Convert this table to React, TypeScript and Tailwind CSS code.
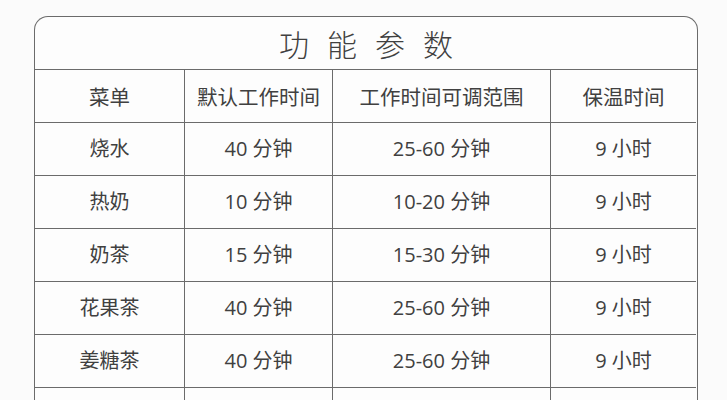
import React from "react";

const rows = [
  ["烧水", "40 分钟", "25-60 分钟", "9 小时"],
  ["热奶", "10 分钟", "10-20 分钟", "9 小时"],
  ["奶茶", "15 分钟", "15-30 分钟", "9 小时"],
  ["花果茶", "40 分钟", "25-60 分钟", "9 小时"],
  ["姜糖茶", "40 分钟", "25-60 分钟", "9 小时"],
  ["", "", "", ""],
];

const header = ["菜单", "默认工作时间", "工作时间可调范围", "保温时间"];

export default function App() {
  return (
    <div
      className="w-[727px] h-[400px] overflow-hidden bg-[#fbfbfb] pt-[16px] pl-[34px]"
      style={{ fontFamily: '"Open Sans", "Noto Sans CJK SC", sans-serif' }}
    >
      <div className="w-[664px] rounded-t-[14px] border-[1.5px] border-b-0 border-[#6b6b6b] text-[#404040] bg-[#fdfdfd]">
        <div className="h-[53px] flex items-center justify-center text-[30px] tracking-[18px] pl-[18px] border-b-[1.5px] border-[#6b6b6b]" style={{ fontFamily: '"Noto Sans CJK SC", sans-serif', fontWeight: 300 }}>
          功能参数
        </div>
        <div className="grid grid-cols-[150px_148px_218px_145px]">
          {header.map((h, i) => (
            <div
              key={i}
              className={`h-[53px] flex items-center justify-center text-[20.5px] border-b-[1.5px] border-[#6b6b6b] ${i < 3 ? "border-r-[1.5px]" : ""}`}
              style={{ fontFamily: '"Noto Sans CJK SC", sans-serif', fontWeight: 400 }}
            >
              {h}
            </div>
          ))}
          {rows.map((r, ri) =>
            r.map((c, ci) => (
              <div
                key={`${ri}-${ci}`}
                className={`h-[53px] flex items-center justify-center text-[20px] border-b-[1.5px] border-[#6b6b6b] ${ci < 3 ? "border-r-[1.5px]" : ""}`}
              >
                {c}
              </div>
            ))
          )}
        </div>
      </div>
    </div>
  );
}
